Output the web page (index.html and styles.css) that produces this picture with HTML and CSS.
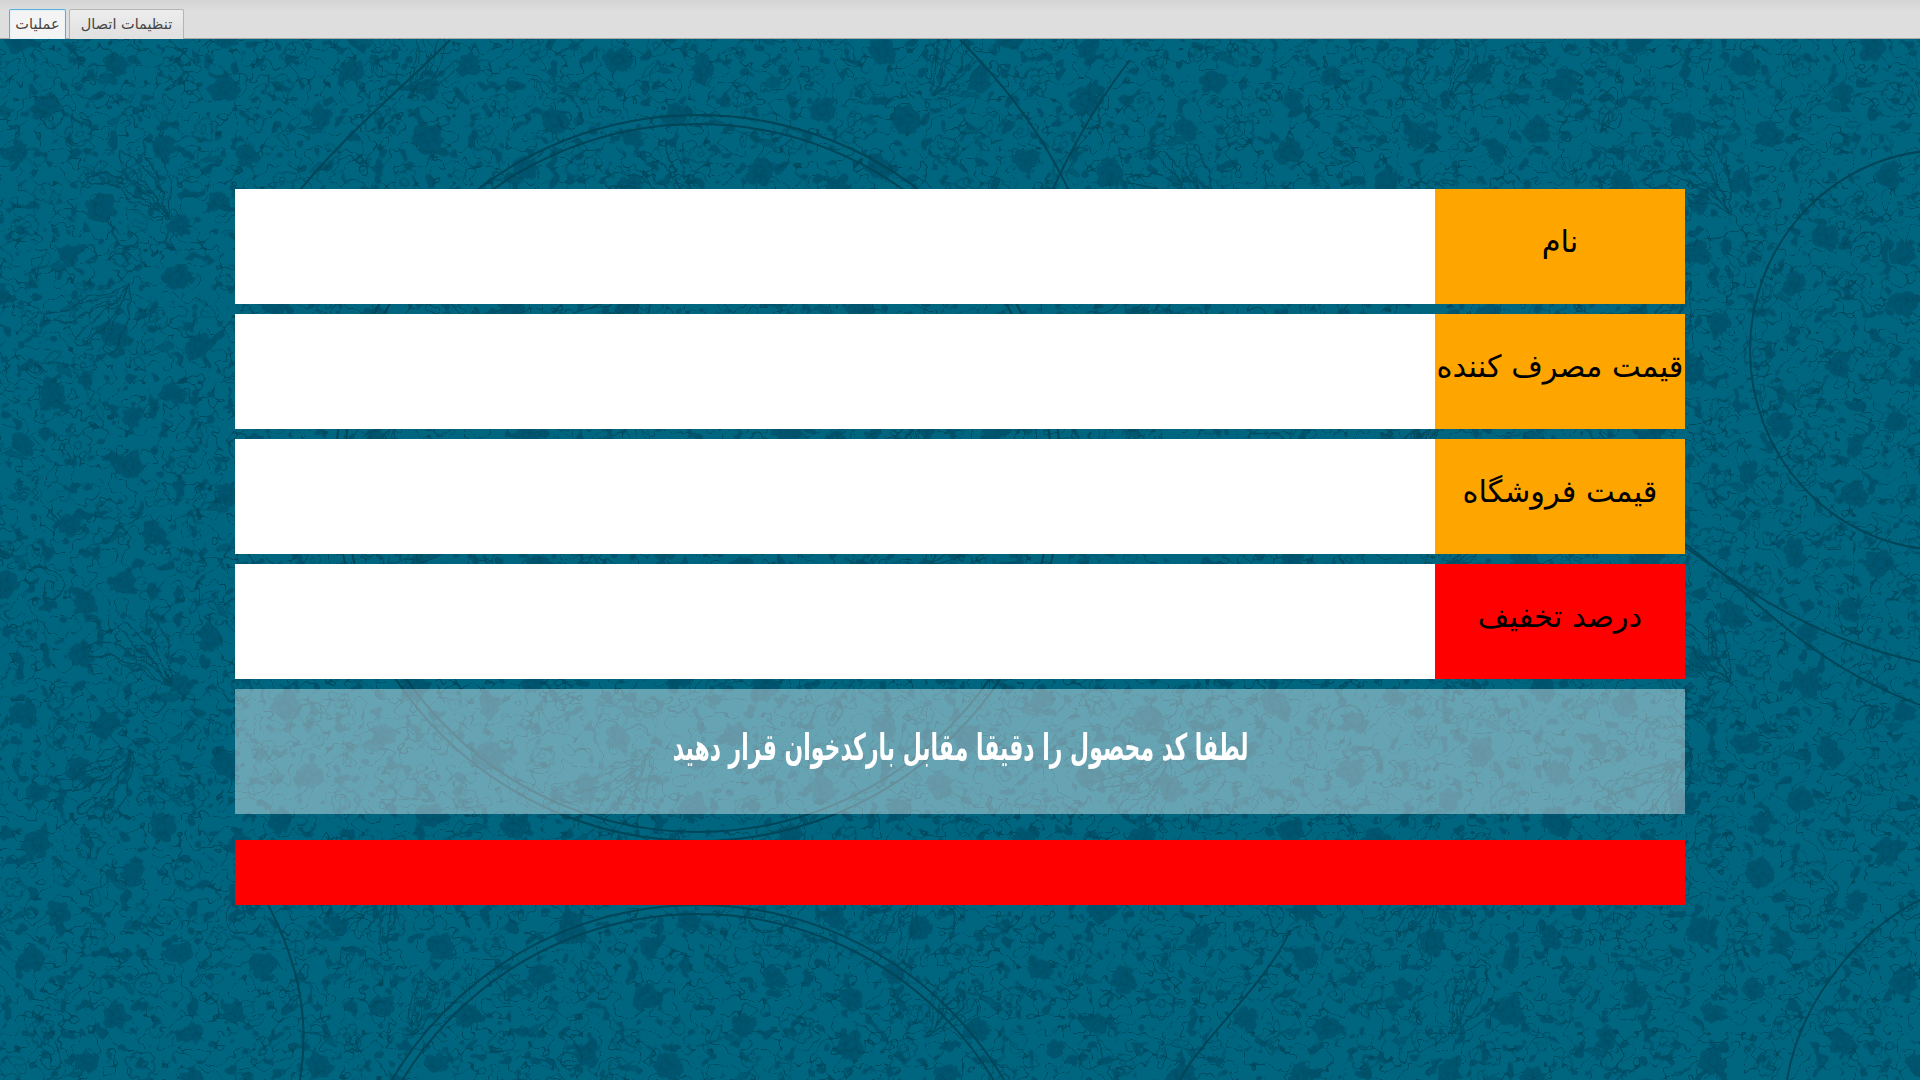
FILE: index.html
```html
<!DOCTYPE html>
<html lang="fa">
<head>
<meta charset="utf-8">
<title>عملیات</title>
<link rel="stylesheet" href="styles.css">
</head>
<body>
<div class="page">
  <svg class="backdrop" width="1920" height="1080" viewBox="0 0 1920 1080" aria-hidden="true">
    <defs>
      <filter id="ink" x="0" y="0" width="100%" height="100%">
        <feTurbulence type="fractalNoise" baseFrequency="0.04" numOctaves="3" seed="7" result="n"/>
        <feDisplacementMap in="SourceGraphic" in2="n" scale="14" xChannelSelector="R" yChannelSelector="G"/>
        <feGaussianBlur stdDeviation="0.4"/>
      </filter>
      <filter id="veins" x="0" y="0" width="100%" height="100%" color-interpolation-filters="sRGB">
        <feTurbulence type="fractalNoise" baseFrequency="0.055 0.06" numOctaves="2" seed="11"/>
        <feColorMatrix values="0 0 0 0 0  0 0 0 0 0  0 0 0 0 0  8 0 0 0 -3.5"/>
        <feComponentTransfer>
          <feFuncA type="table" tableValues="0 0 0 0 0 1 1 0 0 0 0 0"/>
        </feComponentTransfer>
        <feGaussianBlur stdDeviation="0.4" result="mask"/>
        <feFlood flood-color="#004a60"/>
        <feComposite in2="mask" operator="in"/>
      </filter>
      <filter id="islands" x="0" y="0" width="100%" height="100%" color-interpolation-filters="sRGB">
        <feTurbulence type="fractalNoise" baseFrequency="0.075" numOctaves="2" seed="23"/>
        <feColorMatrix values="0 0 0 0 0  0 0 0 0 0  0 0 0 0 0  0 14 0 0 -8.6"/>
        <feGaussianBlur stdDeviation="0.6" result="mask"/>
        <feFlood flood-color="#00536c"/>
        <feComposite in2="mask" operator="in"/>
      </filter>
      <g id="flower">
        <path class="blob" d="M0-16C6-18 12-12 9-6C16-8 20 0 14 5C18 11 10 17 5 12C2 19-7 18-7 11C-14 13-19 5-13 0C-18-7-10-14-5-9C-6-13-4-16 0-16Z"/>
        <path class="ink" d="M0-7C4-7 6-3 5 0C6 4 2 7-1 6C-5 6-7 2-5-1C-6-4-3-7 0-7ZM0-16L0-7M14 5L5 0M-13 0L-5-1M5 12L2 5"/>
      </g>
      <g id="rosette">
        <path class="ink" d="M0-13C5-17 11-12 8-7C14-8 17-1 12 3C16 8 9 14 4 10C2 16-6 16-6 10C-12 12-16 5-11 1C-16-4-10-11-5-8C-6-11-3-13 0-13Z"/>
        <circle class="ink" r="4"/>
      </g>
      <path id="curl" class="ink" d="M0 0C8-15 30-16 35 0C38 12 22 17 17 8C14 1 23-3 27 3"/>
      <g id="sprig">
        <path class="ink" d="M0 0C18-8 34-4 52-18"/>
        <path class="ink" d="M18-5C15-15 23-23 31-23C33-14 28-7 18-5Z"/>
        <path class="leaf" d="M34-8C40-3 49 0 57-2C52-11 42-13 34-8Z"/>
        <path class="ink" d="M8-3C4 5 8 13 15 15C20 8 16 0 8-3Z"/>
      </g>
      <g id="palmette">
        <path class="ink" d="M0 0C-10-25-35-44-66-50C-76-52-82-46-76-42C-48-36-24-20 0 0Z"/>
        <path class="ink" d="M0 0C-4-28-16-50-34-66C-42-72-48-66-43-60C-26-42-12-24 0 0Z"/>
        <path class="ink" d="M0 0C6-24 4-46-6-70C-10-78-17-74-15-66C-10-44-6-22 0 0Z"/>
        <path class="ink" d="M-8-14C-20-20-30-30-36-42M-13-8C-26-12-40-20-52-34"/>
        <path class="ink" d="M-56 4C-62 16-54 28-42 26C-34 24-34 14-42 14M-24 18C-18 28-6 26-4 16"/>
      </g>
      <pattern id="tileA" width="210" height="195" patternUnits="userSpaceOnUse" patternTransform="rotate(14)">
        <use href="#flower" transform="translate(28 30) scale(.85)"/>
        <use href="#rosette" transform="translate(80 18) scale(.85)"/>
        <use href="#flower" transform="translate(130 34) rotate(40) scale(.7)"/>
        <use href="#rosette" transform="translate(184 24) rotate(20)"/>
        <use href="#curl" transform="translate(52 50) rotate(20) scale(.65)"/>
        <use href="#sprig" transform="translate(90 66) rotate(-18) scale(.8)"/>
        <use href="#sprig" transform="translate(156 60) rotate(130) scale(.7)"/>
        <use href="#rosette" transform="translate(18 78) scale(.8)"/>
        <use href="#flower" transform="translate(68 92) rotate(70) scale(.8)"/>
        <use href="#curl" transform="translate(164 74) rotate(-14) scale(.7)"/>
        <use href="#flower" transform="translate(194 102) rotate(15) scale(.75)"/>
        <use href="#sprig" transform="translate(6 124) rotate(-30) scale(.75)"/>
        <use href="#rosette" transform="translate(110 110) rotate(30) scale(.95)"/>
        <use href="#flower" transform="translate(52 144) rotate(110) scale(.7)"/>
        <use href="#curl" transform="translate(84 138) rotate(160) scale(.65)"/>
        <use href="#sprig" transform="translate(116 146) rotate(12) scale(.8)"/>
        <use href="#rosette" transform="translate(170 140) scale(.85)"/>
        <use href="#flower" transform="translate(18 176) rotate(30) scale(.65)"/>
        <use href="#rosette" transform="translate(88 176) rotate(10) scale(.75)"/>
        <use href="#flower" transform="translate(148 178) rotate(200) scale(.8)"/>
        <use href="#curl" transform="translate(180 172) rotate(40) scale(.6)"/>
      </pattern>
      <pattern id="tileB" width="520" height="470" patternUnits="userSpaceOnUse" x="0" y="36">
        <use href="#palmette" transform="translate(170 178) rotate(-8)"/>
        <use href="#palmette" transform="translate(130 246) scale(1 -1) rotate(-8)"/>
        <use href="#palmette" transform="translate(410 60) rotate(64) scale(.8)"/>
        <use href="#palmette" transform="translate(400 380) rotate(-110) scale(.85)"/>
        <use href="#curl" transform="translate(290 220) rotate(-30)"/>
        <use href="#curl" transform="translate(40 60) rotate(60)"/>
        <use href="#curl" transform="translate(260 420) rotate(200)"/>
      </pattern>
    </defs>
    <rect class="layer" filter="url(#islands)" width="1920" height="1080"/>
    <rect class="layer" filter="url(#veins)" width="1920" height="1080"/>
    <g filter="url(#ink)">
      <rect class="fill-a" x="-20" y="-20" width="1960" height="1120"/>
      <rect class="fill-b" x="-20" y="-20" width="1960" height="1120"/>
    </g>
    <g class="arcs">
      <circle cx="698" cy="478" r="363"/>
      <circle cx="698" cy="478" r="354"/>
      <circle cx="698" cy="1260" r="355"/>
      <circle cx="698" cy="1260" r="346"/>
      <ellipse cx="1945" cy="350" rx="195" ry="200"/>
      <path d="M1685 547C1760 600 1820 640 1920 662"/>
      <path d="M1680 540C1750 590 1800 660 1920 705"/>
      <path d="M960 40C1020 100 1060 160 1090 240M1130 60C1090 110 1060 170 1030 240"/>
      <path d="M300 190C350 130 400 90 450 40M260 890C300 960 310 1020 300 1080"/>
      <path d="M1787 1080C1800 1000 1860 930 1920 900M1290 930C1270 980 1200 1040 1180 1080"/>
    </g>
  </svg>

  <div class="tabs">
    <button class="tab tab-active" type="button">عملیات</button>
    <button class="tab" type="button">تنظیمات اتصال</button>
  </div>

  <main class="panel">
    <div class="row">
      <input class="field" type="text" readonly>
      <div class="label label-orange">نام</div>
    </div>
    <div class="row">
      <input class="field" type="text" readonly>
      <div class="label label-orange">قیمت مصرف کننده</div>
    </div>
    <div class="row">
      <input class="field" type="text" readonly>
      <div class="label label-orange">قیمت فروشگاه</div>
    </div>
    <div class="row">
      <input class="field" type="text" readonly>
      <div class="label label-red">درصد تخفیف</div>
    </div>
    <div class="notice"><span class="notice-text">لطفا کد محصول را دقیقا مقابل بارکدخوان قرار دهید</span></div>
    <div class="alert"></div>
  </main>
</div>
</body>
</html>
```
FILE: styles.css
```css
* { box-sizing: border-box; }
html, body { margin: 0; padding: 0; }
body { font-family: "DejaVu Sans", sans-serif; background: #006680; }

.page {
  position: relative;
  width: 1920px;
  height: 1080px;
  overflow: hidden;
  background: #006680;
}
.backdrop { position: absolute; left: 0; top: 0; display: block; }
.backdrop .layer { fill: #000; }
.backdrop .ink { fill: none; stroke: #004a60; stroke-width: 1.3; }
.backdrop .blob { fill: #00536c; stroke: #004a60; stroke-width: 1; }
.backdrop .leaf { fill: #005872; stroke: #004a60; stroke-width: 1; }
.backdrop .fill-a { fill: url(#tileA); opacity: .85; }
.backdrop .fill-b { fill: url(#tileB); }
.backdrop .arcs { fill: none; stroke: #004558; stroke-width: 2; }

.tabs {
  position: relative;
  display: flex;
  align-items: flex-end;
  gap: 3px;
  height: 39px;
  padding-left: 9px;
  background: linear-gradient(#d4d4d4, #dedede 30%);
  border-bottom: 1px solid #a9a9a9;
}
.tab {
  height: 30px;
  padding: 0 0 2px;
  margin-bottom: -1px;
  font-family: "DejaVu Sans", sans-serif;
  font-size: 14.5px;
  color: #444;
  background: linear-gradient(#ededed, #e0e0e0);
  border: 1px solid #b4b4b4;
  border-bottom: 0;
  border-radius: 2px 2px 0 0;
}
.tab:first-of-type { width: 57px; }
.tab:last-of-type { width: 115px; }
.tab-active {
  background: #f4f4f4;
  border: 1px solid #56b0dc;
  border-bottom: 0;
  box-shadow: inset 0 0 0 1px #e4f2f9;
}

.panel {
  position: relative;
  display: flex;
  flex-direction: column;
  padding: 150px 235px 0;
}
.row {
  display: flex;
  height: 115px;
  margin-bottom: 10px;
}
.field {
  flex: 1;
  min-width: 0;
  border: 0;
  border-radius: 0;
  padding: 0;
  background: #fff;
}
.label {
  display: flex;
  align-items: center;
  justify-content: center;
  width: 250px;
  padding-bottom: 10px;
  direction: rtl;
  font-size: 30.5px;
  color: #000;
  white-space: nowrap;
}
.label-orange { background: #ffa500; }
.label-red { background: #f00; }

.notice {
  display: flex;
  align-items: center;
  justify-content: center;
  height: 125px;
  padding: 0 0 8px 2px;
  background: rgba(255, 255, 255, .4);
}
.notice-text {
  direction: rtl;
  font-size: 37px;
  font-weight: bold;
  color: #fff;
  white-space: nowrap;
  display: inline-block;
  transform: scaleX(.594);
}
.alert {
  height: 65px;
  margin-top: 26px;
  background: #f00;
}
```
